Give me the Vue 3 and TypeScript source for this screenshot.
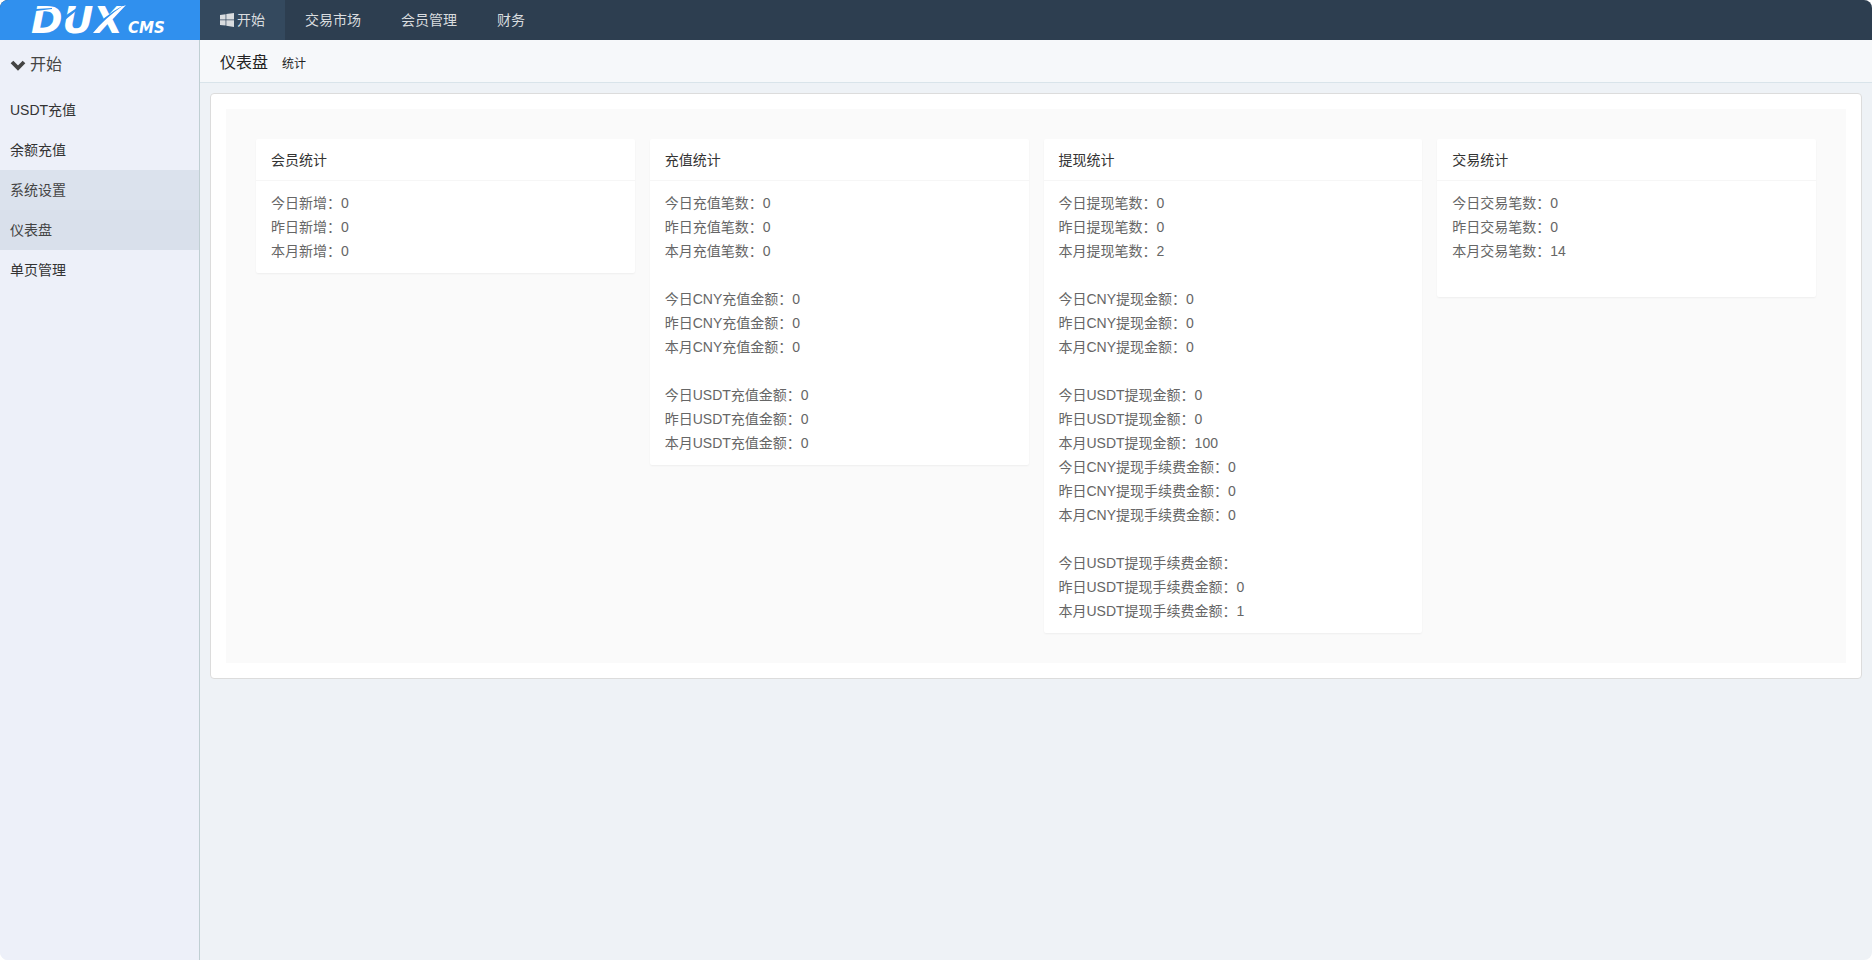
<script setup lang="ts">
interface StatLine {
  label: string
  value: string
}
interface StatCard {
  title: string
  lines: (StatLine | null)[]
}

const navItems: string[] = ['交易市场', '会员管理', '财务']

const menuItems: { text: string; state: string }[] = [
  { text: 'USDT充值', state: '' },
  { text: '余额充值', state: '' },
  { text: '系统设置', state: 'hovered' },
  { text: '仪表盘', state: 'current' },
  { text: '单页管理', state: '' },
]

const periods = ['今日', '昨日', '本月']

function group(name: string, values: string[]): StatLine[] {
  return periods.map((period, i) => ({ label: `${period}${name}：`, value: values[i] }))
}

const zeros = ['0', '0', '0']

const cards: StatCard[] = [
  { title: '会员统计', lines: group('新增', zeros) },
  {
    title: '充值统计',
    lines: [
      ...group('充值笔数', zeros),
      null,
      ...group('CNY充值金额', zeros),
      null,
      ...group('USDT充值金额', zeros),
    ],
  },
  {
    title: '提现统计',
    lines: [
      ...group('提现笔数', ['0', '0', '2']),
      null,
      ...group('CNY提现金额', zeros),
      null,
      ...group('USDT提现金额', ['0', '0', '100']),
      ...group('CNY提现手续费金额', zeros),
      null,
      ...group('USDT提现手续费金额', ['', '0', '1']),
    ],
  },
  { title: '交易统计', lines: [...group('交易笔数', ['0', '0', '14']), null] },
]
</script>

<template>
  <div class="app">
    <header class="topbar">
      <a class="logo" href="#" aria-label="DUX CMS">
        <svg width="200" height="40" viewBox="0 0 200 40">
          <text class="logo-main" x="31" y="33">DUX</text>
          <text class="logo-sub" x="128" y="33">CMS</text>
          <path d="M62 18 L84 3 L86 3 L65 20 Z" fill="#3090ee" />
          <path d="M36 9 L52 8 L52 9 L36 11 Z" fill="#3090ee" />
          <path d="M107 18 Q115 9 126 5 L121 10 L111 20 Z" fill="#fff" />
          <path d="M90 33 Q103 16 124 5 Q105 18 93 33 Z" fill="#3090ee" />
        </svg>
      </a>
      <nav class="nav">
        <a class="nav-link active" href="#">
          <svg class="win" width="14" height="14" viewBox="0 0 14 14" fill="currentColor">
            <path d="M0 2 L5.6 1.2 V6.5 H0 Z M6.3 1.1 L14 0 V6.5 H6.3 Z M0 7.3 H5.6 V12.6 L0 11.9 Z M6.3 7.3 H14 V13.9 L6.3 12.8 Z" />
          </svg>
          <span>开始</span>
        </a>
        <a v-for="item in navItems" :key="item" class="nav-link" href="#">{{ item }}</a>
      </nav>
    </header>
    <div class="body">
      <aside class="sidebar">
        <h2 class="side-title">
          <svg width="16" height="16" viewBox="0 0 16 16" fill="none" stroke="currentColor" stroke-width="3.8">
            <path d="M2 5 L8 11 L14 5" />
          </svg>
          <span>开始</span>
        </h2>
        <a v-for="item in menuItems" :key="item.text" class="side-link" :class="item.state" href="#">{{ item.text }}</a>
      </aside>
      <main class="main">
        <div class="heading">
          <h1>仪表盘</h1>
          <small>统计</small>
        </div>
        <div class="panel">
          <div class="board">
            <section v-for="card in cards" :key="card.title" class="card">
              <h3>{{ card.title }}</h3>
              <div class="card-body">
                <p v-for="(line, i) in card.lines" :key="i">
                  <template v-if="line">{{ line.label }}{{ line.value }}</template>
                </p>
              </div>
            </section>
          </div>
        </div>
      </main>
    </div>
  </div>
</template>

<style>
body {
  margin: 0;
  background: #fff;
}
</style>

<style scoped>
.app {
  display: flex;
  flex-direction: column;
  min-height: 100vh;
  border-radius: 8px;
  overflow: hidden;
  background: #eef2f6;
  color: #333;
  font: 14px/24px "Liberation Sans", "Noto Sans CJK SC", sans-serif;
}
a {
  color: inherit;
  text-decoration: none;
}
h1,
h2,
h3,
p {
  margin: 0;
  font-weight: 400;
}
.topbar {
  display: flex;
  height: 40px;
  background: #2d3e50;
  color: #d9dcdf;
}
.logo {
  width: 200px;
  background: #3090ee;
}
.logo svg {
  display: block;
  overflow: visible;
}
.logo text {
  font-family: "DejaVu Sans", sans-serif;
  font-weight: 700;
  font-style: italic;
  fill: #fff;
}
.logo-main {
  font-size: 38px;
}
.logo-sub {
  font-size: 15px;
}
.nav {
  display: flex;
}
.nav-link {
  display: flex;
  align-items: center;
  gap: 3px;
  padding: 0 20px;
}
.nav-link.active {
  background: #34495e;
}
.body {
  display: flex;
  flex: 1;
}
.sidebar {
  box-sizing: border-box;
  flex: none;
  width: 200px;
  border-right: 1px solid #c0cfd3;
  background: #edf0f9;
}
.side-title {
  display: flex;
  align-items: center;
  gap: 4px;
  height: 50px;
  padding-left: 10px;
  font-size: 16px;
  color: #444;
}
.side-link {
  display: block;
  padding: 0 10px;
  line-height: 40px;
}
.side-link.hovered {
  background: #dbe2ed;
  color: #444;
}
.side-link.current {
  background: #d9e0eb;
  color: #444;
}
.main {
  flex: 1;
  min-width: 0;
}
.heading {
  display: flex;
  align-items: baseline;
  gap: 14px;
  height: 42px;
  padding: 0 20px;
  border-bottom: 1px solid #d9e4ea;
  background: #f6f8fa;
  line-height: 46px;
  color: #222;
}
.heading h1 {
  font-size: 16px;
}
.heading small {
  font-size: 12px;
}
.panel {
  margin: 10px;
  padding: 15px;
  border: 1px solid #dcdcdc;
  border-radius: 4px;
  background: #fff;
}
.board {
  display: grid;
  grid-template-columns: repeat(4, 1fr);
  align-items: start;
  gap: 15px;
  padding: 30px;
  background: #fafafa;
}
.card {
  border-radius: 2px;
  background: #fff;
  box-shadow: 0 1px 2px rgba(0, 0, 0, 0.05);
}
.card h3 {
  height: 41px;
  padding: 0 15px;
  border-bottom: 1px solid #f6f6f6;
  font-size: 14px;
  line-height: 42px;
}
.card-body {
  padding: 10px 15px;
  color: #666;
}
.card-body p {
  min-height: 24px;
}
</style>
